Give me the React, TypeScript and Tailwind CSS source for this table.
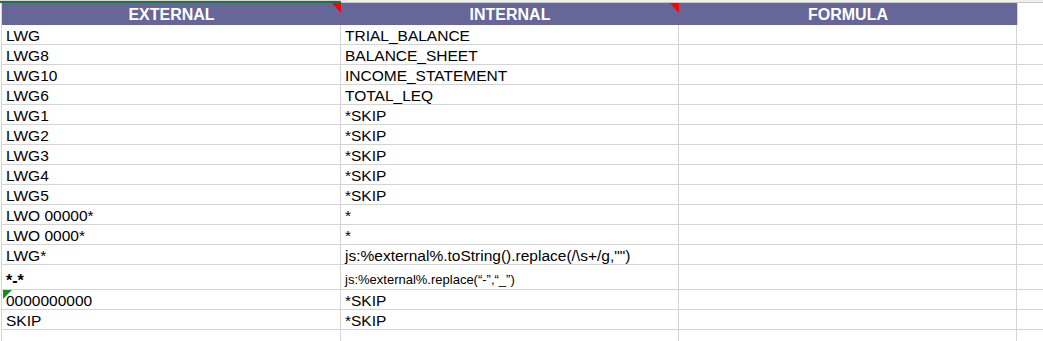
const rows: { ext: string; int: string; small?: boolean; bold?: boolean; tall?: boolean; flag?: boolean }[] = [
  { ext: "LWG", int: "TRIAL_BALANCE" },
  { ext: "LWG8", int: "BALANCE_SHEET" },
  { ext: "LWG10", int: "INCOME_STATEMENT" },
  { ext: "LWG6", int: "TOTAL_LEQ" },
  { ext: "LWG1", int: "*SKIP" },
  { ext: "LWG2", int: "*SKIP" },
  { ext: "LWG3", int: "*SKIP" },
  { ext: "LWG4", int: "*SKIP" },
  { ext: "LWG5", int: "*SKIP" },
  { ext: "LWO 00000*", int: "*" },
  { ext: "LWO 0000*", int: "*" },
  { ext: "LWG*", int: 'js:%external%.toString().replace(/\\s+/g,"")' },
  { ext: "*-*", int: "js:%external%.replace(\u201c-\u201d,\u201c_\u201d)", small: true, bold: true, tall: true },
  { ext: "0000000000", int: "*SKIP", flag: true },
  { ext: "SKIP", int: "*SKIP" },
  { ext: "", int: "" },
];

function RedMark() {
  return <span className="absolute top-0 right-0 w-[9px] h-[10px] bg-[#ff0000] [clip-path:polygon(0_0,100%_0,100%_100%)]" />;
}

export default function App() {
  return (
    <div className="w-[1043px] h-[341px] overflow-hidden bg-white text-black font-['Liberation_Sans',Arial,sans-serif] text-[15.5px]">
      {/* top strip */}
      <div className="flex h-[3px]">
        <div className="w-[341px] flex flex-col">
          <div className="h-px bg-[#d4d4d4]" />
          <div className="h-[2px] bg-[#217346]" />
        </div>
        <div className="flex-1 flex flex-col">
          <div className="h-[2px] bg-[#efefef]" />
          <div className="h-px bg-[#c6c6c6]" />
        </div>
      </div>

      {/* header */}
      <div className="flex h-[22px] pl-px">
        <div className="relative w-[340px] border-l border-[#d4d4d4] bg-[#666699] text-white font-bold text-[16px] flex items-center justify-center pt-px">
          EXTERNAL
          <RedMark />
        </div>
        <div className="relative w-[338px] bg-[#666699] text-white font-bold text-[16px] flex items-center justify-center pt-px">
          INTERNAL
          <RedMark />
        </div>
        <div className="w-[338px] bg-[#666699] text-white font-bold text-[16px] flex items-center justify-center pt-px">
          FORMULA
        </div>
        <div className="flex-1 border-l border-[#d4d4d4]" />
      </div>

      {rows.map((r, i) => (
        <div key={i} className={`flex pl-px ${r.tall ? "h-[25px]" : "h-[20px]"}`}>
          <div className={`relative w-[340px] border-l border-r border-b border-[#d4d4d4] flex items-end pl-[4px] leading-[17px] ${r.bold ? "font-bold text-[16px]" : ""}`}>
            {r.flag && (
              <span className="absolute top-0 left-px w-[9px] h-[9px] bg-[#1a8a1a] [clip-path:polygon(0_0,100%_0,0_100%)]" />
            )}
            {r.ext}
          </div>
          <div className={`w-[338px] border-r border-b border-[#d4d4d4] flex items-end pl-[4px] whitespace-nowrap ${r.small ? "text-[13px] leading-[17px] pb-px" : "leading-[17px]"}`}>
            {r.int}
          </div>
          <div className="w-[338px] border-r border-b border-[#d4d4d4]" />
          <div className="flex-1 border-b border-[#d4d4d4]" />
        </div>
      ))}
    </div>
  );
}
